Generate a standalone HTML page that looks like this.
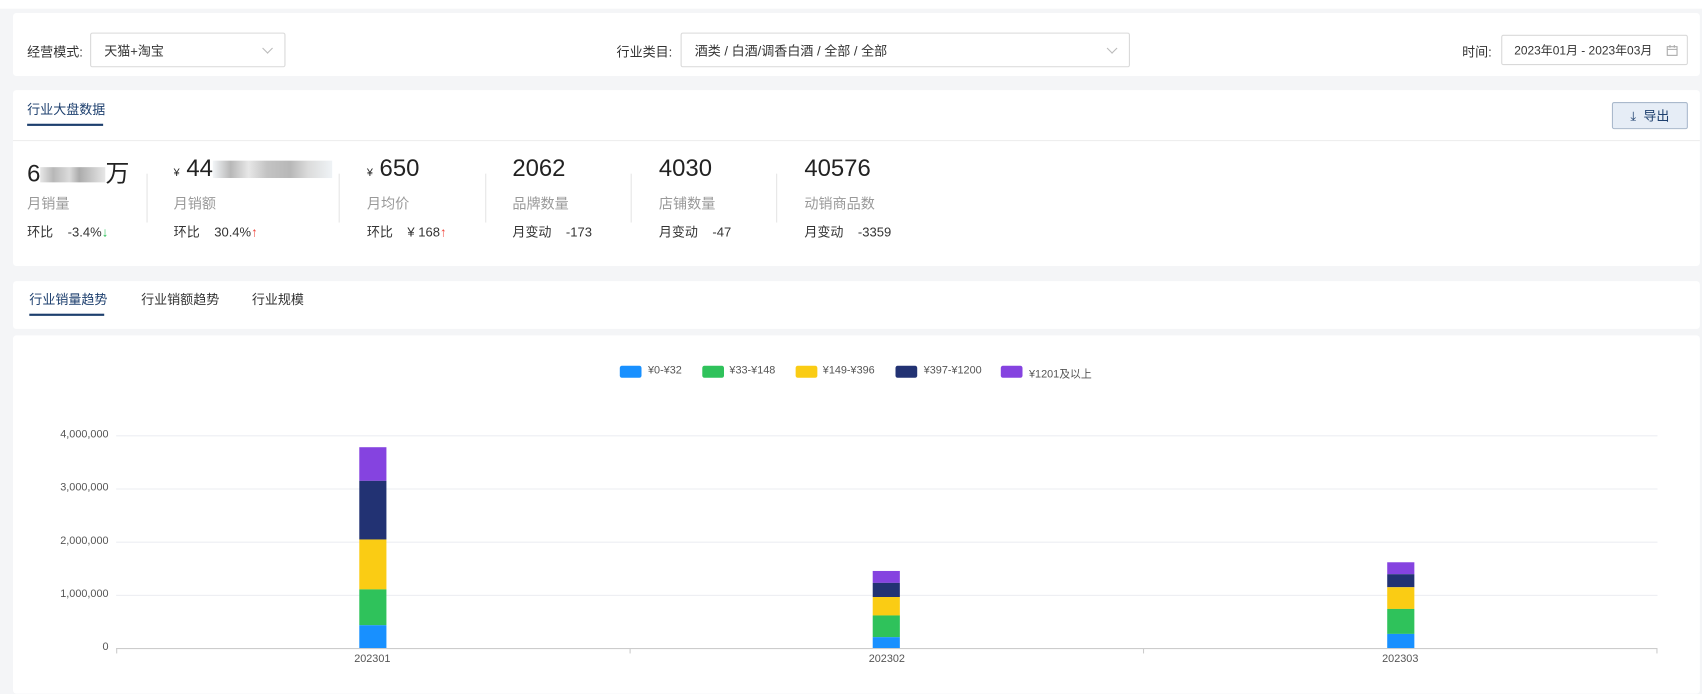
<!DOCTYPE html>
<html><head><meta charset="utf-8"><style>
*{margin:0;padding:0;box-sizing:border-box}
html,body{width:1702px;height:686px;overflow:hidden;background:#f4f5f7}
body{font-family:"Liberation Sans","Noto Sans CJK SC",sans-serif;color:#333}
#w{position:absolute;left:0;top:0;width:1568px;height:632px;transform:scale(1.08546);transform-origin:0 0;background:#f4f5f7}
.a{position:absolute}
.card{position:absolute;background:#fff;border-radius:3px}
.t12{font-size:12px}
.sel{position:absolute;border:1px solid #d9d9d9;border-radius:2px;background:#fff;font-size:12px;color:#333;padding-left:12px;display:flex;align-items:center}
.chev{position:absolute;right:12px;top:50%;width:7px;height:7px;border-right:1px solid #bbb;border-bottom:1px solid #bbb;transform:translateY(-70%) rotate(45deg)}
.big{position:absolute;font-size:22px;color:#222;top:142px}
.lab{position:absolute;font-size:13px;color:#999;top:177px}
.sub{position:absolute;font-size:12px;color:#333;top:205px}
.vd{position:absolute;width:1px;background:#e5e5e5;top:160px;height:45px}
.grid{position:absolute;left:107px;width:1420px;height:1px;background:#eceef2}
.yl{position:absolute;left:20px;width:80px;text-align:right;font-size:10px;color:#555}
.bar{position:absolute;width:25px}
.lg{position:absolute;top:337px;width:20px;height:11px;border-radius:2px}
.lt{position:absolute;top:336px;font-size:10px;color:#555}
</style></head><body><div id="w">
<div class="a" style="left:0;top:0;width:1568px;height:8px;background:#fff"></div>
<div class="card" style="left:12px;top:12px;width:1554px;height:58px"></div>
<div class="a t12" style="left:25px;top:39px">经营模式:</div>
<div class="sel" style="left:83px;top:30px;width:180px;height:32px">天猫+淘宝<span class="chev"></span></div>
<div class="a t12" style="left:568px;top:39px">行业类目:</div>
<div class="sel" style="left:627px;top:30px;width:414px;height:32px">酒类 / 白酒/调香白酒 / 全部 / 全部<span class="chev"></span></div>
<div class="a t12" style="left:1347px;top:39px">时间:</div>
<div class="sel" style="left:1383px;top:32px;width:172px;height:28px;font-size:11px;padding-left:11px">2023年01月 - 2023年03月
<svg class="a" style="right:8px;top:8px" width="11" height="11" viewBox="0 0 11 11"><rect x="1" y="2" width="9" height="8" fill="none" stroke="#aaa"/><line x1="1" y1="4.5" x2="10" y2="4.5" stroke="#aaa"/><line x1="3.5" y1="0.5" x2="3.5" y2="3" stroke="#aaa"/><line x1="7.5" y1="0.5" x2="7.5" y2="3" stroke="#aaa"/></svg></div>

<div class="card" style="left:12px;top:83px;width:1554px;height:162px"></div>
<div class="a t12" style="left:25px;top:92px;color:#1d3f6e">行业大盘数据</div>
<div class="a" style="left:25px;top:114px;width:70px;height:2px;background:#1d3f6e"></div>
<div class="a" style="left:12px;top:129px;width:1554px;height:1px;background:#eee"></div>
<div class="a" style="left:1485px;top:94px;width:70px;height:25px;background:#e6edf6;border:1px solid #aab9cc;border-radius:2px;font-size:12px;color:#1d3f6e;display:flex;align-items:center;justify-content:center">⤓&nbsp; 导出</div>

<div class="big" style="left:25px">6<span style="display:inline-block;width:60px;height:14px;background:linear-gradient(90deg,#ddd,#999 20%,#ccc 45%,#888 60%,#ddd);vertical-align:middle;opacity:.7"></span>万</div>
<div class="big" style="left:160px"><span style="font-size:10px">¥</span> 44<span style="display:inline-block;width:110px;height:16px;background:linear-gradient(90deg,#eef2f5,#999 15%,#ddd 30%,#aaa 45%,#999 65%,#ccc 80%,#e8eef2);vertical-align:middle;opacity:.7"></span></div>
<div class="big" style="left:338px"><span style="font-size:10px">¥</span> 650</div>
<div class="big" style="left:472px">2062</div>
<div class="big" style="left:607px">4030</div>
<div class="big" style="left:741px">40576</div>
<div class="lab" style="left:25px">月销量</div>
<div class="lab" style="left:160px">月销额</div>
<div class="lab" style="left:338px">月均价</div>
<div class="lab" style="left:472px">品牌数量</div>
<div class="lab" style="left:607px">店铺数量</div>
<div class="lab" style="left:741px">动销商品数</div>
<div class="sub" style="left:25px">环比&nbsp;&nbsp;&nbsp;&nbsp;-3.4%<span style="color:#2fc25b">↓</span></div>
<div class="sub" style="left:160px">环比&nbsp;&nbsp;&nbsp;&nbsp;30.4%<span style="color:#f0483e">↑</span></div>
<div class="sub" style="left:338px">环比&nbsp;&nbsp;&nbsp;&nbsp;¥ 168<span style="color:#f0483e">↑</span></div>
<div class="sub" style="left:472px">月变动&nbsp;&nbsp;&nbsp;&nbsp;-173</div>
<div class="sub" style="left:607px">月变动&nbsp;&nbsp;&nbsp;&nbsp;-47</div>
<div class="sub" style="left:741px">月变动&nbsp;&nbsp;&nbsp;&nbsp;-3359</div>
<div class="vd" style="left:135px"></div><div class="vd" style="left:312px"></div><div class="vd" style="left:447px"></div><div class="vd" style="left:581px"></div><div class="vd" style="left:715px"></div>

<div class="card" style="left:12px;top:259px;width:1554px;height:44px"></div>
<div class="a t12" style="left:27px;top:267px;color:#1d3f6e">行业销量趋势</div>
<div class="a t12" style="left:130px;top:267px">行业销额趋势</div>
<div class="a t12" style="left:232px;top:267px">行业规模</div>
<div class="a" style="left:27px;top:289px;width:69px;height:2px;background:#1d3f6e"></div>

<div class="card" style="left:12px;top:309px;width:1554px;height:330px"></div>
<div class="lg" style="left:571px;background:#1890ff"></div><div class="lt" style="left:597px">¥0-¥32</div>
<div class="lg" style="left:647px;background:#2fc25b"></div><div class="lt" style="left:672px">¥33-¥148</div>
<div class="lg" style="left:733px;background:#facc14"></div><div class="lt" style="left:758px">¥149-¥396</div>
<div class="lg" style="left:825px;background:#223273"></div><div class="lt" style="left:851px">¥397-¥1200</div>
<div class="lg" style="left:922px;background:#8543e0"></div><div class="lt" style="left:948px">¥1201及以上</div>

<div class="grid" style="top:401px"></div><div class="grid" style="top:450px"></div><div class="grid" style="top:499px"></div><div class="grid" style="top:548px"></div>
<div class="grid" style="top:597px;background:#ccc"></div>
<div class="yl" style="top:395px">4,000,000</div><div class="yl" style="top:444px">3,000,000</div><div class="yl" style="top:493px">2,000,000</div><div class="yl" style="top:542px">1,000,000</div><div class="yl" style="top:591px">0</div>
<div class="a" style="left:580px;top:597px;width:1px;height:5px;background:#ccc"></div>
<div class="a" style="left:1053px;top:597px;width:1px;height:5px;background:#ccc"></div>
<div class="a" style="left:1526px;top:597px;width:1px;height:5px;background:#ccc"></div>
<div class="a" style="left:107px;top:597px;width:1px;height:5px;background:#ccc"></div>
<div class="a" style="left:318px;top:602px;width:50px;text-align:center;font-size:10px;color:#555">202301</div>
<div class="a" style="left:792px;top:602px;width:50px;text-align:center;font-size:10px;color:#555">202302</div>
<div class="a" style="left:1265px;top:602px;width:50px;text-align:center;font-size:10px;color:#555">202303</div>

<div class="bar" style="left:331px;top:412px;height:31px;background:#8543e0"></div>
<div class="bar" style="left:331px;top:443px;height:54px;background:#223273"></div>
<div class="bar" style="left:331px;top:497px;height:46px;background:#facc14"></div>
<div class="bar" style="left:331px;top:543px;height:33px;background:#2fc25b"></div>
<div class="bar" style="left:331px;top:576px;height:21px;background:#1890ff"></div>

<div class="bar" style="left:804px;top:526px;height:11px;background:#8543e0"></div>
<div class="bar" style="left:804px;top:537px;height:13px;background:#223273"></div>
<div class="bar" style="left:804px;top:550px;height:17px;background:#facc14"></div>
<div class="bar" style="left:804px;top:567px;height:20px;background:#2fc25b"></div>
<div class="bar" style="left:804px;top:587px;height:10px;background:#1890ff"></div>

<div class="bar" style="left:1278px;top:518px;height:11px;background:#8543e0"></div>
<div class="bar" style="left:1278px;top:529px;height:12px;background:#223273"></div>
<div class="bar" style="left:1278px;top:541px;height:20px;background:#facc14"></div>
<div class="bar" style="left:1278px;top:561px;height:23px;background:#2fc25b"></div>
<div class="bar" style="left:1278px;top:584px;height:13px;background:#1890ff"></div>
</div></body></html>
